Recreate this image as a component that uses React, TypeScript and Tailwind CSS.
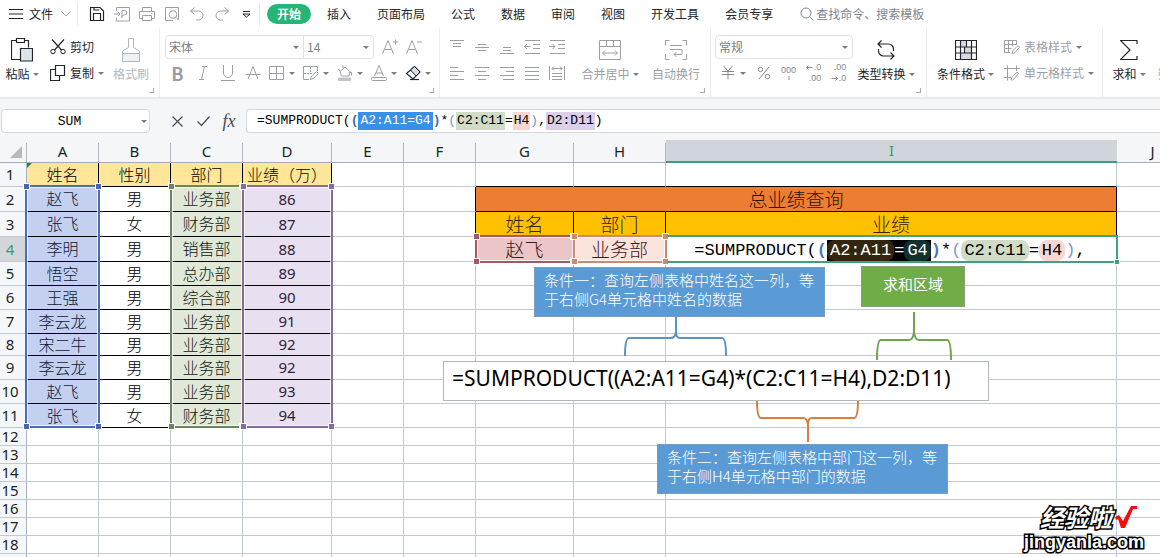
import { useState, type ReactNode } from "react";

interface Person {
  name: string;
  sex: string;
  dept: string;
  score: number;
  height: string;
}

const people: Person[] = [
  { name: "赵飞", sex: "男", dept: "业务部", score: 86, height: "h-[25px]" },
  { name: "张飞", sex: "女", dept: "财务部", score: 87, height: "h-[25px]" },
  { name: "李明", sex: "男", dept: "销售部", score: 88, height: "h-[25px]" },
  { name: "悟空", sex: "男", dept: "总办部", score: 89, height: "h-[24px]" },
  { name: "王强", sex: "男", dept: "综合部", score: 90, height: "h-[24px]" },
  { name: "李云龙", sex: "男", dept: "业务部", score: 91, height: "h-[24px]" },
  { name: "宋二牛", sex: "男", dept: "业务部", score: 92, height: "h-[22px]" },
  { name: "李云龙", sex: "男", dept: "业务部", score: 92, height: "h-[24px]" },
  { name: "赵飞", sex: "男", dept: "业务部", score: 93, height: "h-[24px]" },
  { name: "张飞", sex: "女", dept: "财务部", score: 94, height: "h-[24px]" },
];

const tabs = ["插入", "页面布局", "公式", "数据", "审阅", "视图", "开发工具", "会员专享"];
const columns = ["A", "B", "C", "D", "E", "F", "G", "H", "I", "J"];
const emptyRows = [12, 13, 14, 15, 16, 17, 18];

function Icon({ w = 16, h = 16, children }: { w?: number; h?: number; children: ReactNode }) {
  return (
    <svg
      width={w}
      height={h}
      viewBox={`0 0 ${w} ${h}`}
      fill="none"
      stroke="currentColor"
      strokeWidth="1"
      className="shrink-0"
      aria-hidden="true"
    >
      {children}
    </svg>
  );
}

function Caret() {
  return (
    <svg width="6" height="3" viewBox="0 0 6 3" className="shrink-0 fill-[#777b82]" aria-hidden="true">
      <path d="M0 0h6L3 3z" />
    </svg>
  );
}

function Group({ className, children }: { className: string; children: ReactNode }) {
  return (
    <div className={`flex h-[69px] shrink-0 flex-col border-r border-[#eceef0] pt-1.5 ${className}`}>
      <div className="flex h-[52px]">{children}</div>
      <div className="mr-[5px] mt-0.5 size-[5px] self-end border-b border-r border-[#a9adb3]" />
    </div>
  );
}

function BigButton({
  icon,
  label,
  className,
  caret = true,
}: {
  icon: ReactNode;
  label: string;
  className: string;
  caret?: boolean;
}) {
  return (
    <button className={`flex shrink-0 flex-col items-center ${className}`}>
      <span className="flex h-[31px] items-center">{icon}</span>
      <span className="flex h-[18px] items-center gap-[3px] whitespace-nowrap">
        {label}
        {caret && <Caret />}
      </span>
    </button>
  );
}

function RowButton({ icon, label, caret = false }: { icon: ReactNode; label: string; caret?: boolean }) {
  return (
    <button className="flex h-[26px] items-center gap-1 whitespace-nowrap">
      {icon}
      {label}
      {caret && <Caret />}
    </button>
  );
}

function Tool({
  label,
  children,
  caret = false,
  className = "w-[25px]",
}: {
  label: string;
  children: ReactNode;
  caret?: boolean;
  className?: string;
}) {
  return (
    <button aria-label={label} className={`flex h-[26px] shrink-0 items-center justify-center gap-1 ${className}`}>
      {children}
      {caret && <Caret />}
    </button>
  );
}

function Picker({ label, value, className }: { label: string; value: string; className: string }) {
  return (
    <div className={`relative flex h-[24px] shrink-0 items-center border border-[#dfe1e4] ${className}`}>
      <select
        aria-label={label}
        defaultValue={value}
        className="h-full w-full appearance-none bg-transparent pl-[3px] text-xs text-[#7a7d82] outline-none"
      >
        <option>{value}</option>
      </select>
      <span className="pointer-events-none absolute right-1">
        <Caret />
      </span>
    </div>
  );
}

function QuickAccess() {
  return (
    <>
      <Tool label="保存">
        <Icon>
          <path d="M1.500 14.500v-13h9.500l3.500 3.500v9.500z M4.500 14.500v-7h7v7 M5 1.500v2.500h5.500" strokeWidth="1.200" />
        </Icon>
      </Tool>
      <span className="flex text-[#9b9fa5]">
        <Tool label="输出为PDF">
          <Icon>
            <path d="M2.500 5v-3.500h13v13.500h-13v-3 M0 8h6M4 6l2 2-2 2 M8 12V4.500h2.500a2.200 2.200 0 0 1 0 4.500c-2 0-3 1-2.500 2.500" />
          </Icon>
        </Tool>
        <Tool label="打印">
          <Icon>
            <path d="M3.500 5.500v-4h9v4 M3.500 12.500h-3v-7h15v7h-3 M3.500 9.500h9v5h-9z M12 7.500h1.500" />
          </Icon>
        </Tool>
        <Tool label="打印预览">
          <Icon>
            <path d="M9 14.500H1.500v-13h13V14 M12 11.500l3 3" />
            <circle cx="9" cy="8.500" r="3.800" />
          </Icon>
        </Tool>
        <Tool label="撤销">
          <Icon>
            <path d="M5.500 1.500l-4 3.500 4 3.500 M1.500 5h8a4.500 4.500 0 0 1 0 9H7" />
          </Icon>
        </Tool>
        <Tool label="恢复">
          <Icon>
            <path d="M10.500 1.500l4 3.500-4 3.500 M14.500 5h-8a4.500 4.500 0 0 0 0 9H9" />
          </Icon>
        </Tool>
      </span>
      <Tool label="自定义快速访问工具栏">
        <Icon w={9} h={8}>
          <path d="M1 1.500h7 M1 4l3.500 3L8 4z" />
        </Icon>
      </Tool>
    </>
  );
}

function MenuBar() {
  return (
    <nav className="flex h-7 items-center text-xs text-[#22262c]">
      <button className="flex items-center gap-1.5 pl-[9px] whitespace-nowrap">
        <Icon w={14} h={12}>
          <path d="M0 1.500h14M0 6h14M0 10.500h14" />
        </Icon>
        文件
        <span className="ml-0.5 text-[#a4a8ad]">
          <Icon w={10} h={6}>
            <path d="M0.500 0.500l4.500 4.500 4.500-4.500" />
          </Icon>
        </span>
      </button>
      <span className="mx-1.5 h-6 w-px bg-[#e8eaec]" />
      <QuickAccess />
      <span className="mr-[7px] h-6 w-px bg-[#e4e8e8]" />
      <button className="h-5 w-11 shrink-0 rounded-full bg-[#27b577] text-center font-bold text-white">开始</button>
      <div className="ml-[3px] flex shrink-0">
        {tabs.map((t) => (
          <button key={t} className="px-[13px] whitespace-nowrap">
            {t}
          </button>
        ))}
      </div>
      <label className="ml-3.5 flex items-center gap-0.5 text-[#7c8494]">
        <Icon w={14} h={14}>
          <circle cx="6" cy="6" r="5" />
          <path d="M9.500 9.500l4 4" />
        </Icon>
        <input
          placeholder="查找命令、搜索模板"
          aria-label="查找命令、搜索模板"
          className="w-[140px] bg-transparent outline-none placeholder:text-[#7c8494]"
        />
      </label>
    </nav>
  );
}

function Ribbon() {
  return (
    <div className="flex overflow-hidden text-xs text-[#22262c]">
      <Group className="w-[160px]">
        <BigButton
          className="w-[44px]"
          label="粘贴"
          icon={
            <Icon w={22} h={24}>
              <path d="M5 2.500H0.500v19H9 M13 2.500h4.500v7" strokeWidth="1.200" />
              <path d="M5.500 0.500h8v4h-8z" strokeWidth="1.200" />
              <path d="M9.500 10.500h12v12.500h-12z" fill="#dfe3ea" strokeWidth="1.200" />
            </Icon>
          }
        />
        <div className="ml-1.5 w-[58px]">
          <RowButton
            label="剪切"
            icon={
              <Icon>
                <path d="M2 0.500l9.500 10.500 M14 0.500L4.500 11" strokeWidth="1.200" />
                <circle cx="3" cy="12.500" r="2.200" />
                <circle cx="13" cy="12.500" r="2.200" />
              </Icon>
            }
          />
          <RowButton
            label="复制"
            caret
            icon={
              <Icon>
                <path d="M5.500 0.500h9v10h-9z M5.500 4.500h-5v11h9v-5" strokeWidth="1.200" />
              </Icon>
            }
          />
        </div>
        <span className="flex text-[#b3b6bb]">
          <BigButton
            className="w-[46px]"
            label="格式刷"
            caret={false}
            icon={
              <Icon w={18} h={24}>
                <path d="M6.500 0.500h5v9l6 3.500v10.500h-17V13l6-3.500z" />
                <path d="M0.500 15.500h17v8h-17z" fill="#f0f1f2" />
              </Icon>
            }
          />
        </span>
      </Group>

      <Group className="w-[280px] pl-[5px]">
        <div className="text-[#9b9fa5]">
          <div className="flex h-[26px] items-center">
            <Picker label="字体" value="宋体" className="w-[139px] rounded-l-sm" />
            <Picker label="字号" value="14" className="-ml-px w-[71px] rounded-r-sm" />
            <Tool label="增大字号" className="ml-1 w-6">
              <Icon>
                <path d="M0.500 15L6 1.500 11.500 15 M2.500 10.500h7 M11 3h5M13.500 0.500v5" />
              </Icon>
            </Tool>
            <Tool label="减小字号" className="w-6">
              <Icon>
                <path d="M0.500 15L6 1.500 11.500 15 M2.500 10.500h7 M11 3h5" />
              </Icon>
            </Tool>
          </div>
          <div className="flex h-[26px] items-center">
            <Tool label="加粗">
              <span className="text-lg font-bold">B</span>
            </Tool>
            <Tool label="倾斜">
              <Icon w={10} h={14}>
                <path d="M4 0.500h5M1 13.500h5M6.500 0.500l-3 13" />
              </Icon>
            </Tool>
            <Tool label="下划线">
              <Icon w={16} h={16}>
                <path d="M3.500 0v8a4.500 4.500 0 0 0 9 0V0 M1 15.500h14" />
              </Icon>
            </Tool>
            <Tool label="删除线">
              <Icon w={16} h={16}>
                <path d="M3 14L8 1.500 13 14 M0.500 9.500h15" />
              </Icon>
            </Tool>
            <Tool label="边框" caret className="w-[34px]">
              <Icon>
                <path d="M0.500 1.500h14v13h-14z M7.500 1.500v13M0.500 8.500h14" />
              </Icon>
            </Tool>
            <Tool label="绘制边框" caret className="w-[34px]">
              <Icon>
                <path d="M14.500 6V1.500h-14v13H6" />
                <path d="M7.500 2v7M1 8.500h8" strokeDasharray="2 1" />
                <path d="M7.500 14.500l1-3.500 5-4.500 2 2-5 5z" />
              </Icon>
            </Tool>
            <Tool label="填充颜色" caret className="w-[34px]">
              <Icon>
                <path d="M3 6.500L8 2l5 4.500-1 4.500H4.500z M3 6.500L1.500 4 M12.500 7.500h2v3 M6 3V0.500" />
                <path d="M1.500 13h12v2.500h-12z" fill="#bfc2c6" stroke="#bfc2c6" />
              </Icon>
            </Tool>
            <Tool label="字体颜色" caret className="w-[34px]">
              <Icon>
                <path d="M3.500 11L8 0.500 12.500 11 M5 8h6" />
                <rect x="0.500" y="12.500" width="15" height="3" rx="1" />
              </Icon>
            </Tool>
            <Tool label="清除" caret className="w-[34px] text-[#22262c]">
              <Icon>
                <path d="M9.500 1.500l5.500 5.500-7 7-6.500-5.500z" fill="#fff" strokeWidth="1.200" />
                <path d="M9.500 1.500l5.500 5.500-4 4L5.500 5z" fill="#d9dde3" />
                <path d="M5 14.500h9" strokeWidth="1.200" />
              </Icon>
            </Tool>
          </div>
        </div>
      </Group>

      <Group className="w-[271px] pl-1">
        <div className="flex text-[#9b9fa5]">
          <div>
            <div className="flex">
              <Tool label="顶端对齐">
                <Icon>
                  <path d="M1 1.500h14M4 4.500h8M4 7.500h8" />
                </Icon>
              </Tool>
              <Tool label="垂直居中">
                <Icon>
                  <path d="M4 5.500h8M1 8.500h14M4 11.500h8" />
                </Icon>
              </Tool>
              <Tool label="底端对齐">
                <Icon>
                  <path d="M4 8.500h8M4 11.500h8M1 14.500h14" />
                </Icon>
              </Tool>
              <Tool label="减少缩进量">
                <Icon>
                  <path d="M1 1.500h15M9 5.500h7M9 9.500h7M1 14.500h15M0.500 7.500h6M3 5L0.500 7.500 3 10" />
                </Icon>
              </Tool>
              <Tool label="增加缩进量">
                <Icon>
                  <path d="M1 1.500h15M9 5.500h7M9 9.500h7M1 14.500h15M0 7.500h6M3.500 5L6 7.500 3.500 10" />
                </Icon>
              </Tool>
            </div>
            <div className="flex">
              <Tool label="左对齐">
                <Icon>
                  <path d="M1 2.500h8M1 6.500h14M1 10.500h8M1 14.500h14" />
                </Icon>
              </Tool>
              <Tool label="水平居中">
                <Icon>
                  <path d="M1 2.500h14M4 6.500h8M1 10.500h14M4 14.500h8" />
                </Icon>
              </Tool>
              <Tool label="右对齐">
                <Icon>
                  <path d="M1 2.500h14M7 6.500h8M1 10.500h14M4 14.500h11" />
                </Icon>
              </Tool>
              <Tool label="两端对齐">
                <Icon>
                  <path d="M1 2.500h14M1 6.500h14M1 10.500h14M1 14.500h14" />
                </Icon>
              </Tool>
              <Tool label="分散对齐">
                <Icon>
                  <path d="M0.500 1v14M15.500 1v14M3 3.500h10M5 1.500L3 3.500l2 2M11 1.500l2 2-2 2M3 8.500h10M3 11.500h10M3 14.500h10" />
                </Icon>
              </Tool>
            </div>
          </div>
          <BigButton
            className="w-[82px]"
            label="合并居中"
            icon={
              <Icon w={22} h={20}>
                <path d="M0.500 0.500h21v19h-21z M0.500 6.500h21 M7.500 0.500v6M14.500 0.500v6 M3.500 13h15M6 10.500L3.500 13 6 15.500M16 10.500l2.500 2.500-2.500 2.500" />
              </Icon>
            }
          />
          <BigButton
            className="w-[50px]"
            label="自动换行"
            caret={false}
            icon={
              <Icon w={22} h={20}>
                <path d="M4.500 0.500h-4v5M17.500 0.500h4v5M0.500 14v5.500h4M21.500 14v5.500h-4 M5 5.500h12M5 9.500h12v5H9 M11.500 12L9 14.500l2.500 2.500" />
              </Icon>
            }
          />
        </div>
      </Group>

      <Group className="w-[216px] pl-1">
        <div className="text-[#85898f]">
          <div className="flex h-[26px] items-center">
            <Picker label="数字格式" value="常规" className="w-[138px] rounded-sm" />
          </div>
          <div className="flex h-[26px] items-center font-['Liberation_Sans',sans-serif] text-[9px] leading-[11px]">
            <Tool label="货币样式" caret className="w-[36px]">
              <Icon>
                <path d="M3.500 1L8 6l4.500-5 M2 6.500h12M2 9.500h12M8 6.500V14.500" />
              </Icon>
            </Tool>
            <Tool label="百分比样式">
              <Icon w={14} h={14}>
                <path d="M12 1L2 13" />
                <circle cx="3.500" cy="3.500" r="2.200" />
                <circle cx="10.500" cy="10.500" r="2.200" />
              </Icon>
            </Tool>
            <Tool label="千位分隔样式">
              <span className="flex flex-col items-center">
                <span>000</span>
                <Icon w={2} h={5}>
                  <path d="M1 0v4" />
                </Icon>
              </span>
            </Tool>
            <Tool label="增加小数位数">
              <span className="flex flex-col items-end">
                <span className="flex items-center gap-px">
                  <Icon w={7} h={5}>
                    <path d="M0.500 2.500h6M2.500 0.500l-2 2 2 2" />
                  </Icon>
                  .0
                </span>
                <span>.00</span>
              </span>
            </Tool>
            <Tool label="减少小数位数">
              <span className="flex flex-col items-end">
                <span>.00</span>
                <span className="flex items-center gap-px">
                  <Icon w={7} h={5}>
                    <path d="M0.500 2.500h6M4.500 0.500l2 2-2 2" />
                  </Icon>
                  .0
                </span>
              </span>
            </Tool>
          </div>
        </div>
        <BigButton
          className="w-[66px]"
          label="类型转换"
          icon={
            <Icon w={20} h={20}>
              <path
                d="M5.500 0.500L2 4l3.500 3.500 M2 4h10.500a5 5 0 0 1 5 5v2 M14.500 12.500L18 16l-3.500 3.500 M18 16H7.500a5 5 0 0 1-5-5V9"
                strokeWidth="1.200"
              />
            </Icon>
          }
        />
      </Group>

      <div className="flex h-[69px] w-[176px] shrink-0 border-r border-[#eceef0] pt-1.5 pl-px">
        <BigButton
          className="w-[75px]"
          label="条件格式"
          icon={
            <Icon w={22} h={20}>
              <path d="M6 1h6v6H6z M6 13h10v6H6z M10 7h6v6h-6z" fill="#d5dae1" stroke="none" />
              <path
                d="M0.500 0.500h21v19h-21z M0.500 7h21M0.500 13h21 M5.500 0.500v19M11.500 0.500v6.500M9.500 7v6M16.500 0.500v19"
                strokeWidth="1.200"
              />
            </Icon>
          }
        />
        <div className="ml-px text-[#9b9fa5]">
          <RowButton
            label="表格样式"
            caret
            icon={
              <Icon>
                <path d="M6 13.500H0.500v-12h12V6 M0.500 5.500h12M0.500 9.500h7M4.500 1.500v12M8.500 1.500v6 M8 14.500l1-3 5-5 1.500 1.500-4.500 5.500c-1 1-2 1-3 1z" />
              </Icon>
            }
          />
          <RowButton
            label="单元格样式"
            caret
            icon={
              <Icon>
                <path d="M0 3.500h16M3.500 0.500v15M12.500 0.500V6M0 12.500h7 M7 15l1-3 5-5 1.500 1.500-4.500 5.500c-1 1-2 1-3 1z" />
              </Icon>
            }
          />
        </div>
      </div>

      <div className="flex h-[69px] shrink-0 pt-1.5">
        <BigButton
          className="w-[52px]"
          label="求和"
          icon={
            <Icon w={18} h={20}>
              <path d="M17 4V0.500H0.500L10 10 0.500 19.500H17V16" strokeWidth="1.200" />
            </Icon>
          }
        />
        <BigButton
          className="w-[38px] text-[#9b9fa5]"
          label="筛选"
          icon={
            <Icon w={18} h={20}>
              <path d="M5 0.500h12l-5 7v10" />
            </Icon>
          }
        />
      </div>
    </div>
  );
}

function FormulaBar() {
  const [cell, setCell] = useState("SUM");
  return (
    <div className="flex h-[42px] shrink-0 items-center border-t-2 border-[#e7e9eb] bg-[#f4f6f8] pt-1 pl-px font-['Liberation_Mono','Noto_Sans_CJK_SC',monospace] text-[13px] text-black">
      <div className="relative flex h-6 w-[149px] shrink-0 items-center rounded-sm border border-[#d5d8dc] bg-white">
        <input
          aria-label="名称框"
          value={cell}
          onChange={(e) => setCell(e.target.value)}
          className="w-full bg-transparent pt-0.5 pr-3 text-center outline-none"
        />
        <span className="absolute right-0.5">
          <Caret />
        </span>
      </div>
      <div className="ml-3.5 flex shrink-0 text-[#454c59]">
        <Tool label="取消" className="w-[26px]">
          <Icon w={11} h={11}>
            <path d="M0.500 0.500l10 10M10.500 0.500l-10 10" strokeWidth="1.200" />
          </Icon>
        </Tool>
        <Tool label="输入" className="w-[26px]">
          <Icon w={13} h={10}>
            <path d="M0.500 5.500l4 4L12.500 0.500" strokeWidth="1.200" />
          </Icon>
        </Tool>
        <Tool label="插入函数" className="w-[26px]">
          <span className="font-['Liberation_Serif',serif] text-lg italic">fx</span>
        </Tool>
      </div>
      <div
        role="textbox"
        aria-label="编辑栏"
        className="ml-1 flex h-6 flex-1 items-center overflow-hidden rounded-l-sm border border-r-0 border-[#d5d8dc] bg-white pl-2.5 leading-[18px] whitespace-pre"
      >
        <span>=SUMPRODUCT(</span>
        <span className="font-bold text-[#4469a8]">(</span>
        <span className="bg-[#3a8fe8] px-0.5 text-white">A2:A11=G4</span>
        <span className="font-bold text-[#4469a8]">)</span>
        <span>*</span>
        <span className="text-[#7f93c4]">(</span>
        <span className="bg-[#d0dcc6] px-px">C2:C11</span>
        <span>=</span>
        <span className="bg-[#f7d7cf] px-px">H4</span>
        <span className="text-[#7f93c4]">)</span>
        <span>,</span>
        <span className="bg-[#dcd0e8] px-px">D2:D11</span>
        <span>)</span>
      </div>
    </div>
  );
}

function RowHead({ n, active = false }: { n?: number; active?: boolean }) {
  return (
    <th
      scope="row"
      className={
        active
          ? "border-r-2 border-b border-[#2f9e7b] border-b-[#c4c8d0] bg-[#d3d6da] pr-[5px] text-[15px] font-normal text-[#2f9e7b]"
          : "border-r border-b border-[#c4c8d0] border-r-[#a9b4c0] bg-[#f5f8fa] pr-[6px] text-[15px] font-normal text-[#1b1f27]"
      }
    >
      {n}
    </th>
  );
}

const plain = "border-r border-b border-[#c4c8d0]";
const boxed = "border-r border-b border-black";
const lookupHead = "border-r border-b border-black bg-[#ffc000] pt-[3px] text-[19px] text-[#33230a]";

// 右侧查询表：第 2~4 行的 G:I 三列
function LookupCells({ row }: { row: number }) {
  if (row === 2) {
    return (
      <td colSpan={3} className={`${boxed} bg-[#ed7d31] pt-[3px] text-[19px] text-[#2b1207]`}>
        总业绩查询
      </td>
    );
  }
  if (row === 3) {
    return (
      <>
        <td className={lookupHead}>姓名</td>
        <td className={lookupHead}>部门</td>
        <td className={lookupHead}>业绩</td>
      </>
    );
  }
  if (row === 4) {
    return (
      <>
        <td className={`${plain} bg-[#ebc5c8] pt-[3px] text-[19px] text-[#3b1c20]`}>赵飞</td>
        <td className={`${plain} bg-[#fbe4de] pt-[3px] text-[19px] text-[#3b1c20]`}>业务部</td>
        <td className={plain}>
          <div className="flex items-center justify-center pt-[3px] pr-0.5 font-['Liberation_Mono',monospace] text-[17px] leading-[21px] font-normal whitespace-pre">
            <span>=SUMPRODUCT(</span>
            <span className="font-bold text-[#4f74b8]">(</span>
            <span className="flex bg-black text-white">
              <span className="rounded-lg bg-[#33260f] px-[3px]">A2:A11</span>
              <span>=</span>
              <span className="rounded-lg bg-[#12302f] px-[3px]">G4</span>
            </span>
            <span className="font-bold text-[#4f74b8]">)</span>
            <span>*</span>
            <span className="text-[#7f93c4]">(</span>
            <span className="rounded-lg bg-[#d0dcc6] px-[3px]">C2:C11</span>
            <span>=</span>
            <span className="rounded-lg bg-[#f7d7d1] px-[3px]">H4</span>
            <span className="text-[#7f93c4]">)</span>
            <span>,</span>
          </div>
        </td>
      </>
    );
  }
  return (
    <>
      <td className={plain} />
      <td className={plain} />
      <td className={plain} />
    </>
  );
}

function Grid() {
  return (
    <table className="w-[1188px] table-fixed border-separate border-spacing-0 text-center font-['Noto_Sans','Noto_Sans_CJK_SC',sans-serif] text-base leading-none font-light text-black">
      <colgroup>
        <col className="w-[27px]" />
        <col className="w-[72px]" />
        <col className="w-[72px]" />
        <col className="w-[72px]" />
        <col className="w-[89px]" />
        <col className="w-[72px]" />
        <col className="w-[72px]" />
        <col className="w-[98px]" />
        <col className="w-[92px]" />
        <col className="w-[451px]" />
        <col className="w-[72px]" />
      </colgroup>
      <thead>
        <tr className="h-[23px] bg-[#f4f6f8] text-[15px]">
          <th className="border-b border-[#a5adb8] align-bottom">
            <div className="flex h-[19px] items-end justify-end border-r border-[#b3b8c2] pr-1 pb-1">
              <svg width="12" height="12" viewBox="0 0 12 12" className="fill-[#b6bac0]" aria-hidden="true">
                <path d="M12 0v12H0z" />
              </svg>
            </div>
          </th>
          {columns.map((c) =>
            c === "I" ? (
              <th key={c} scope="col" className="border-b-2 border-[#3f9c80] bg-[#d0d4db] font-normal text-[#2f9e7b]">
                {c}
              </th>
            ) : (
              <th key={c} scope="col" className="border-b border-[#a5adb8] align-bottom font-normal text-[#1b1f27]">
                <div className="flex h-[19px] items-center justify-center border-r border-[#b3b8c2] pb-0.5">{c}</div>
              </th>
            )
          )}
        </tr>
      </thead>
      <tbody>
        <tr className="h-[24px]">
          <RowHead n={1} />
          {["姓名", "性别", "部门", "业绩（万）"].map((t) => (
            <td key={t} className={`${boxed} bg-[#ffe699] whitespace-nowrap`}>
              {t}
            </td>
          ))}
          <td className={plain} />
          <td className={plain} />
          <td className="border-r border-b border-[#c4c8d0] border-b-black" />
          <td className="border-r border-b border-[#c4c8d0] border-b-black" />
          <td className="border-r border-b border-[#c4c8d0] border-b-black" />
          <td className={plain} />
        </tr>
        {people.map((p, i) => {
          const row = i + 2;
          return (
            <tr key={row} className={p.height}>
              <RowHead n={row} active={row === 4} />
              <td className={`${boxed} bg-[#c3d0f0] text-[#101836]`}>{p.name}</td>
              <td className={boxed}>{p.sex}</td>
              <td className={`${boxed} bg-[#e0e8d8] text-[#10160d]`}>{p.dept}</td>
              <td className={`${boxed} bg-[#e8dff1] text-[15px] font-normal text-[#2c2435]`}>{p.score}</td>
              <td className={plain} />
              <td className={row < 4 ? "border-r border-b border-[#c4c8d0] border-r-black" : plain} />
              <LookupCells row={row} />
              <td className={plain} />
            </tr>
          );
        })}
        {emptyRows.map((row) => (
          <tr key={row} className="h-[18px]">
            <RowHead n={row} />
            {columns.map((c) => (
              <td key={c} className={plain} />
            ))}
          </tr>
        ))}
        <tr className="h-[18px]">
          <RowHead />
          {columns.map((c) => (
            <td key={c} className={plain} />
          ))}
        </tr>
      </tbody>
    </table>
  );
}

// 引用区域的彩色边框，四角带拖动手柄
function RangeBox({ className, handle }: { className: string; handle: string }) {
  const corner = `absolute size-[7px] border border-white ${handle}`;
  return (
    <div className={`pointer-events-none absolute border-2 shadow-[inset_0_0_0_1px_rgba(255,255,255,0.7)] ${className}`}>
      <span className={`${corner} -top-1 -left-1`} />
      <span className={`${corner} -top-1 -right-1`} />
      <span className={`${corner} -bottom-1 -left-1`} />
      <span className={`${corner} -right-1 -bottom-1`} />
    </div>
  );
}

function Note({ className, lines }: { className: string; lines: string[] }) {
  return (
    <div
      className={`absolute border border-[#7a9cc0] bg-[#5b9bd5] pt-0.5 pl-[9px] text-[15px] leading-[19px] font-light whitespace-nowrap text-white ${className}`}
    >
      {lines.map((l) => (
        <p key={l}>{l}</p>
      ))}
    </div>
  );
}

function Shapes() {
  return (
    <>
      <svg
        width="1160"
        height="417"
        viewBox="0 140 1160 417"
        fill="none"
        strokeWidth="2"
        className="pointer-events-none absolute top-0 left-0"
        aria-hidden="true"
      >
        <path d="M27 163h5l-5 5z" fill="#2e7d4f" />
        <path d="M625 356q0-18 4-18h42q4 0 5-6v-15M726 356q0-18-4-18h-42q-4 0-4-6v-15" stroke="#5b93c4" />
        <path d="M877 360q0-20 4-20h28q4 0 5-8v-20M951 360q0-20-4-20h-28q-4 0-5-8v-20" stroke="#70a550" />
        <path d="M757 400q0 18 4 18h42q4 0 5 6v18M858 400q0 18-4 18h-42q-4 0-4 6v18" stroke="#d5803f" />
      </svg>
      <Note
        className="top-[127px] left-[534px] h-[50px] w-[291px]"
        lines={["条件一：查询左侧表格中姓名这一列，等", "于右侧G4单元格中姓名的数据"]}
      />
      <Note
        className="top-[304px] left-[657px] h-[50px] w-[291px]"
        lines={["条件二：查询左侧表格中部门这一列，等", "于右侧H4单元格中部门的数据"]}
      />
      <div className="absolute top-[126px] left-[861px] flex h-[41px] w-[104px] items-center justify-center border border-[#8a9c7c] bg-[#70ad47] pb-1 text-[15px] text-white">
        求和区域
      </div>
      <div className="absolute top-[221px] left-[443px] flex h-[40px] w-[546px] items-center border border-[#b4b8be] bg-white pb-1 pl-2 font-['Noto_Sans',sans-serif] text-[21px] whitespace-nowrap text-black">
        =SUMPRODUCT((A2:A11=G4)*(C2:C11=H4),D2:D11)
      </div>
    </>
  );
}

function Watermark() {
  return (
    <div className="pointer-events-none absolute right-4 bottom-1 flex flex-col items-end font-bold text-white [-webkit-text-stroke:3px_black] [paint-order:stroke_fill]">
      <div className="flex items-center gap-0.5 pr-1.5 text-2xl leading-7">
        <span className="italic">经验啦</span>
        <svg width="24" height="24" viewBox="0 0 24 24" className="fill-[#f40d0d]" aria-hidden="true">
          <path d="M1 12l4-2 4 6L17 1h6v3h-4L11 23H7L4 14l-2 1z" />
        </svg>
      </div>
      <div className="font-['Liberation_Sans',sans-serif] text-lg leading-[22px]">jingyanla.com</div>
    </div>
  );
}

export default function App() {
  return (
    <div className="flex h-screen flex-col overflow-hidden bg-white font-['Noto_Sans_CJK_SC',sans-serif]">
      <header className="shrink-0">
        <MenuBar />
        <Ribbon />
      </header>
      <FormulaBar />
      <main className="relative min-h-0 flex-1 overflow-hidden border-t border-[#f4f6f8]">
        <Grid />
        <RangeBox className="top-[45px] left-[25px] h-[243px] w-[75px] border-[#4c6ead]" handle="bg-[#4a66b0]" />
        <RangeBox className="top-[45px] left-[170px] h-[243px] w-[74px] border-[#6b8560]" handle="bg-[#6b8560]" />
        <RangeBox className="top-[45px] left-[242px] h-[243px] w-[91px] border-[#876a9f]" handle="bg-[#8a68a8]" />
        <RangeBox className="top-[95px] left-[475px] h-[28px] w-[100px] border-[#a15a63]" handle="bg-[#a15a63]" />
        <RangeBox className="top-[95px] left-[573px] h-[28px] w-[94px] border-[#cf8872]" handle="bg-[#cf8872]" />
        <div className="pointer-events-none absolute top-[95px] left-[667px] h-[28px] w-[451px] border-2 border-l-0 border-[#3fa37a]">
          <span className="absolute -right-1 -bottom-1 size-[6px] border border-white bg-[#3fa37a]" />
        </div>
        <Shapes />
        <Watermark />
      </main>
    </div>
  );
}
